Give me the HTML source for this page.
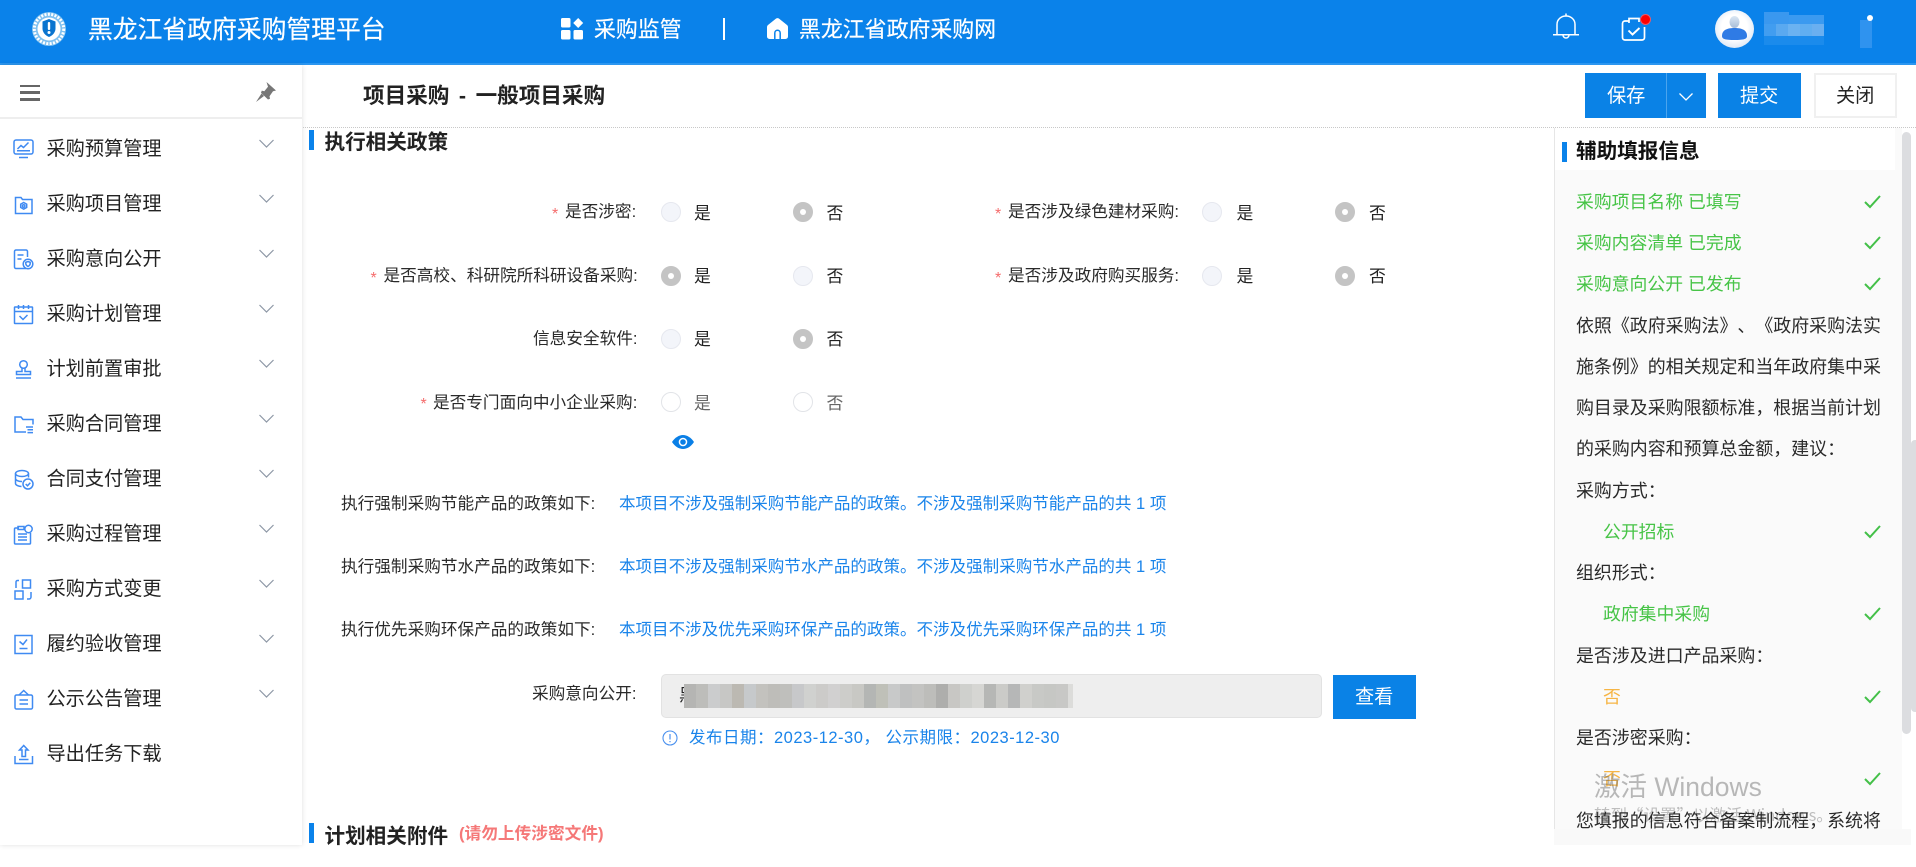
<!DOCTYPE html>
<html lang="zh-CN"><head><meta charset="utf-8"><title>项目采购</title>
<style>
html,body{margin:0;padding:0;width:1916px;height:867px;overflow:hidden;background:#fff}
body{position:relative;font-family:"Liberation Sans","Noto Sans CJK SC",sans-serif;color:#222;font-feature-settings:"chws" 0,"palt" 0;text-spacing-trim:space-all}
.a{position:absolute}
.t{position:absolute;white-space:nowrap;line-height:30px;height:30px}
.h{-webkit-text-stroke:.2px #fff}
.m{font-size:19.2px;left:46.5px;color:#222}
.l{font-size:16.65px;color:#2a2a2a}
.s{font-size:16px;color:#f56c6c}
.b{font-size:16.8px;color:#222}
.k{font-size:16.55px;color:#1a84ea}
.p{font-size:17.95px;left:1576px;color:#2a2a2a}
.g{font-size:17.85px;color:#47c447}
.o{font-size:17.85px;color:#f6b545;left:1603px}
.r{position:absolute;width:18px;height:18px;border:1px solid #e6e8ef;border-radius:50%;background:#f3f5fa}
.r.c{background:#c4c4c4;border-color:#c4c4c4}
.r.c:after{content:"";position:absolute;left:6px;top:6px;width:6px;height:6px;border-radius:50%;background:#fff}
.r.w{background:#fff;border-color:#e2e4e8}
svg{position:absolute;display:block;overflow:visible}
.i{left:13px;width:21px;height:21px}
.i *{fill:none;stroke:#3f8af2;stroke-width:1.5}
.ch{left:259px;width:15px;height:9px}
.ch polyline{fill:none;stroke:#8d97a5;stroke-width:1.2}
.tk{left:1864px;width:17px;height:13px}
.tk polyline{fill:none;stroke:#43c048;stroke-width:2}
</style></head><body>

<!-- header -->
<div class="a" style="left:0;top:0;width:1916px;height:63px;background:#0a82ea"></div>
<div class="a" style="left:0;top:63px;width:1916px;height:2px;background:#2b96f0"></div>
<svg style="left:32px;top:12px;width:34px;height:34px" viewBox="0 0 34 34">
<circle cx="17" cy="17" r="17" fill="#7fc0f0"/><circle cx="17" cy="17" r="14.700" fill="none" stroke="#fff" stroke-width="3" stroke-dasharray="2 1.400"/>
<circle cx="17" cy="17" r="11.500" fill="#fff"/>
<path d="M17 7l6.500 2.500v7c0 4-3 7-6.500 8.500-3.500-1.500-6.500-4.500-6.500-8.500v-7z" fill="#0a74cf"/>
<rect x="15.800" y="10" width="2.400" height="8" rx="1" fill="#fff"/><circle cx="17" cy="20.500" r="1.500" fill="#fff"/></svg>
<div class="t h" style="left:88px;top:16px;font-size:24.8px;color:#fff">黑龙江省政府采购管理平台</div>
<svg style="left:561px;top:18px;width:22px;height:22px" viewBox="0 0 22 22" fill="#fff">
<rect x="0" y="0" width="9.5" height="9.5" rx="1.5"/><rect x="0" y="12" width="9.5" height="9.5" rx="1.5"/><rect x="12.5" y="12" width="9.5" height="9.5" rx="1.5"/>
<path d="M17.2 0l5 5-5 5-5-5z"/></svg>
<div class="t h" style="left:594px;top:15px;font-size:21.9px;color:#fff">采购监管</div>
<div class="a" style="left:723px;top:18px;width:2px;height:22px;background:#fff"></div>
<svg style="left:767px;top:18px;width:21px;height:21px" viewBox="0 0 21 21">
<path d="M8.800 .8a2.700 2.700 0 0 1 3.400 0L20 7a2.500 2.500 0 0 1 1 2v9.500a2.500 2.500 0 0 1-2.500 2.500h-16A2.500 2.500 0 0 1 0 18.500V9a2.500 2.500 0 0 1 1-2z" fill="#fff"/>
<path d="M7.800 21v-6a2.700 2.700 0 0 1 5.400 0v6" fill="none" stroke="#0a82ea" stroke-width="1.500"/></svg>
<div class="t h" style="left:799px;top:14.500px;font-size:21.9px;color:#fff">黑龙江省政府采购网</div>
<svg style="left:1553px;top:13px;width:26px;height:26px" viewBox="0 0 26 26" fill="none" stroke="#fff" stroke-width="1.500">
<path d="M4 21.500V11.500C4 6.500 8 3 13 3s9 3.500 9 8.500v10"/><path d="M0 21.800h26"/><path d="M13 0.500v2.500"/><path d="M10 22a3 3 0 0 0 6 0"/></svg>
<svg style="left:1622px;top:17px;width:28px;height:26px" viewBox="0 0 28 26" fill="none" stroke="#fff" stroke-width="1.700">
<path d="M7 4H3a2.500 2.500 0 0 0-2.500 2.500v14A2.500 2.500 0 0 0 3 23h17a2.500 2.500 0 0 0 2.500-2.500V10"/>
<path d="M7 6V1.500h10V5"/><path d="M6.500 13.500l4 4 7-6.500" stroke-width="1.900"/></svg>
<div class="a" style="left:1639.500px;top:13.500px;width:9px;height:9px;background:#f00;border-radius:50%;border:1px solid #e85a6a"></div>
<svg style="left:1715px;top:10px;width:39px;height:38px" viewBox="0 0 39 38">
<defs><radialGradient id="av" cx="50%" cy="45%" r="55%"><stop offset="60%" stop-color="#fff"/><stop offset="100%" stop-color="#dfe9f6"/></radialGradient>
<linearGradient id="hd" x1="0" y1="0" x2="0" y2="1"><stop offset="0" stop-color="#dbe7f4"/><stop offset="1" stop-color="#a8bdd8"/></linearGradient></defs>
<ellipse cx="19.500" cy="19" rx="19.500" ry="19" fill="url(#av)"/>
<ellipse cx="19.500" cy="12" rx="5" ry="6" fill="url(#hd)"/>
<path d="M7 26c0-6 5-8 12.500-8S32 20 32 26c0 3-3 4-12.500 4S7 29 7 26z" fill="#2f7be5"/></svg>
<svg style="left:1764px;top:12px;width:60px;height:33px" viewBox="0 0 60 33">
<rect x="0" y="0" width="25" height="12" fill="#3a98ef"/><rect x="25" y="3" width="35" height="9" fill="#3b9af0"/>
<rect x="0" y="12" width="12" height="12" fill="#419df0"/><rect x="12" y="12" width="12" height="12" fill="#5aa9f0"/><rect x="24" y="12" width="12" height="12" fill="#6bb2f1"/><rect x="36" y="12" width="12" height="12" fill="#60aef1"/><rect x="48" y="12" width="12" height="12" fill="#6aaff0"/>
<rect x="0" y="24" width="60" height="9" fill="#1b8bec"/></svg>
<div class="a" style="left:1860px;top:20px;width:12px;height:28px;background:#2f93ef"></div>
<div class="a" style="left:1867px;top:15px;width:6px;height:6px;border-radius:50%;background:#fff"></div>

<!-- sidebar -->
<div class="a" style="left:0;top:65px;width:302px;height:780px;background:#fff;box-shadow:0 0 5px rgba(0,0,0,.13)"></div>
<div class="a" style="left:0;top:117px;width:302px;height:1.500px;background:#eee"></div>
<div class="a" style="left:20px;top:84.500px;width:20px;height:2.800px;background:#666"></div>
<div class="a" style="left:20px;top:91.300px;width:20px;height:2.800px;background:#666"></div>
<div class="a" style="left:20px;top:98px;width:20px;height:2.800px;background:#666"></div>
<svg style="left:255px;top:82px;width:21px;height:20px" viewBox="0 0 21 20" fill="#777">
<path d="M11.500 0L21 8.500l-3 .8-3.500 5 .5 2.500-2 .7-7-6.700.8-2.200 2.500.6 3.700-4.400z"/><path d="M6.500 11.500l2.500 2.500L1 20z"/></svg>

<svg class="i" style="top:139px" viewBox="0 0 21 21"><rect x="1" y="1" width="19" height="14" rx="2"/><polyline points="4.500,10 8,6.500 10.500,8.500 15.500,3.500"/><path d="M4 11.800h13M6 18.500h9"/></svg>
<svg class="i" style="top:194px" viewBox="0 0 21 21"><path d="M2.500 3.500h5.500l1.500 2h9.500v14h-16.500z"/><path d="M10.700 8.500l3 1.700v3.300l-3 1.700-3-1.700v-3.300z"/><circle cx="10.700" cy="12" r="1.200"/></svg>
<svg class="i" style="top:249px" viewBox="0 0 21 21"><path d="M13 19.500H3a1.500 1.500 0 0 1-1.500-1.500V2.500A1.500 1.500 0 0 1 3 1h10a1.500 1.500 0 0 1 1.500 1.500V8" stroke="#a8c0f2"/><path d="M4.500 6h6M4.500 10h4" /><circle cx="15" cy="15" r="4.800"/><path d="M15 12.500l2.200 .8v1.500c0 1.200-1 2-2.200 2.700-1.200-.7-2.200-1.500-2.200-2.700v-1.500z"/></svg>
<svg class="i" style="top:304px" viewBox="0 0 21 21"><rect x="1.500" y="3" width="18" height="16.500" rx=".5"/><path d="M1.500 7.500h18"/><path d="M5.500 1v4M10.500 1v4M15.500 1v4"/><polyline points="6.500,12 10,15.500 14.500,11"/></svg>
<svg class="i" style="top:359px" viewBox="0 0 21 21"><circle cx="10.500" cy="5.500" r="3.800"/><path d="M9 9v3.500H3.500v3h14v-3H12V9"/><path d="M3 19h15" stroke-width="2" stroke="#a8c0f2"/></svg>
<svg class="i" style="top:414px" viewBox="0 0 21 21"><path d="M13 18H2V3h6l2 2.500h10v5"/><path d="M13 13h7M14.500 15.800h5.500M14.500 18.600h5.500" stroke-width="1.500"/></svg>
<svg class="i" style="top:469px" viewBox="0 0 21 21"><ellipse cx="9" cy="4.500" rx="6.500" ry="3"/><path d="M2.500 4.500v10c0 1.500 3 3 6 3M15.500 4.500v4M2.500 9.500c0 1.700 3 3 6.500 3"/><circle cx="15" cy="15" r="5"/><polyline points="12.700,15 14.500,16.800 17.300,13.800"/></svg>
<svg class="i" style="top:524px" viewBox="0 0 21 21"><path d="M6 4H2.500a1 1 0 0 0-1 1v14a1 1 0 0 0 1 1h14a1 1 0 0 0 1-1V9" stroke="#a8b8f2"/><path d="M5 2.500h6v3H5z"/><circle cx="15.500" cy="5" r="3.700"/><path d="M5 10h9M5 13h9M5 16h9"/></svg>
<svg class="i" style="top:579px" viewBox="0 0 21 21"><rect x="9.500" y="1" width="8" height="8"/><rect x="2" y="12" width="8" height="8"/><path d="M3 9V3a1.500 1.500 0 0 1 1.500-1.500H6M18 13v5a2 2 0 0 1-2 2h-2"/></svg>
<svg class="i" style="top:634px" viewBox="0 0 21 21"><rect x="2" y="1.500" width="17" height="18" stroke="#7aa5f2"/><polyline points="6.500,7.500 10,10.500 14,5.500"/><path d="M6.500 14.500h8"/></svg>
<svg class="i" style="top:689px" viewBox="0 0 21 21"><rect x="2" y="6" width="17.500" height="14" rx="1.500"/><path d="M6 6l4.700-4.500L15.500 6"/><path d="M6.500 11h8.500M6.500 15h8.500"/></svg>
<svg class="i" style="top:744px" viewBox="0 0 21 21"><path d="M2 12v7.500h17.500V12"/><path d="M6 15.500h9.500"/><path d="M10.700 1.500l-4.200 4.500h2.500v6.500h3.500V6H15z"/></svg>

<div class="t m" style="top:134.500px">采购预算管理</div>
<div class="t m" style="top:189.500px">采购项目管理</div>
<div class="t m" style="top:244.500px">采购意向公开</div>
<div class="t m" style="top:299.500px">采购计划管理</div>
<div class="t m" style="top:354.500px">计划前置审批</div>
<div class="t m" style="top:409.500px">采购合同管理</div>
<div class="t m" style="top:464.500px">合同支付管理</div>
<div class="t m" style="top:519.500px">采购过程管理</div>
<div class="t m" style="top:574.500px">采购方式变更</div>
<div class="t m" style="top:629.500px">履约验收管理</div>
<div class="t m" style="top:684.500px">公示公告管理</div>
<div class="t m" style="top:739.500px">导出任务下载</div>

<svg class="ch" style="top:139px" viewBox="0 0 15 9"><polyline points="0.500,1 7.500,8 14.500,1"/></svg>
<svg class="ch" style="top:194px" viewBox="0 0 15 9"><polyline points="0.500,1 7.500,8 14.500,1"/></svg>
<svg class="ch" style="top:249px" viewBox="0 0 15 9"><polyline points="0.500,1 7.500,8 14.500,1"/></svg>
<svg class="ch" style="top:304px" viewBox="0 0 15 9"><polyline points="0.500,1 7.500,8 14.500,1"/></svg>
<svg class="ch" style="top:359px" viewBox="0 0 15 9"><polyline points="0.500,1 7.500,8 14.500,1"/></svg>
<svg class="ch" style="top:414px" viewBox="0 0 15 9"><polyline points="0.500,1 7.500,8 14.500,1"/></svg>
<svg class="ch" style="top:469px" viewBox="0 0 15 9"><polyline points="0.500,1 7.500,8 14.500,1"/></svg>
<svg class="ch" style="top:524px" viewBox="0 0 15 9"><polyline points="0.500,1 7.500,8 14.500,1"/></svg>
<svg class="ch" style="top:579px" viewBox="0 0 15 9"><polyline points="0.500,1 7.500,8 14.500,1"/></svg>
<svg class="ch" style="top:634px" viewBox="0 0 15 9"><polyline points="0.500,1 7.500,8 14.500,1"/></svg>
<svg class="ch" style="top:689px" viewBox="0 0 15 9"><polyline points="0.500,1 7.500,8 14.500,1"/></svg>

<!-- title bar -->
<div class="t" style="left:363px;top:81px;font-size:21.600px;font-weight:700;color:#222;word-spacing:3.500px">项目采购 - 一般项目采购</div>
<div class="a" style="left:303px;top:127px;width:1613px;height:0;border-top:1px dotted #c8c8c8"></div>
<div class="a" style="left:1585px;top:73px;width:121px;height:45px;background:#0a82e6"></div>
<div class="a" style="left:1666px;top:73px;width:1px;height:45px;background:#4ba4ee"></div>
<div class="t" style="left:1607px;top:82px;font-size:19.200px;color:#fff">保存</div>
<svg style="left:1679px;top:93px;width:14px;height:8px" viewBox="0 0 14 8"><polyline points="0.500,0.500 7,7 13.500,0.500" fill="none" stroke="#fff" stroke-width="1.300"/></svg>
<div class="a" style="left:1718px;top:73px;width:83px;height:45px;background:#0a82e6"></div>
<div class="t" style="left:1740px;top:82px;font-size:19.200px;color:#fff">提交</div>
<div class="a" style="left:1814px;top:73px;width:79px;height:41px;border:2px solid #f0f0f0;background:#fff"></div>
<div class="t" style="left:1836px;top:82px;font-size:19.200px;color:#222">关闭</div>

<!-- section -->
<div class="a" style="left:309px;top:130px;width:5px;height:20px;background:#0a82ea"></div>
<div class="t" style="left:324.500px;top:128px;font-size:20.600px;font-weight:700;color:#222">执行相关政策</div>

<!-- form rows -->
<div class="t s" style="left:552px;top:200px">*</div>
<div class="t l" style="left:565px;top:196.500px">是否涉密:</div>
<div class="r" style="left:661px;top:202px"></div><div class="t b" style="left:694px;top:198.500px">是</div>
<div class="r c" style="left:793px;top:202px"></div><div class="t b" style="left:826.500px;top:198.500px">否</div>

<div class="t s" style="left:995px;top:200px">*</div>
<div class="t l" style="left:1008px;top:196.500px">是否涉及绿色建材采购:</div>
<div class="r" style="left:1202px;top:202px"></div><div class="t b" style="left:1236.500px;top:198.500px">是</div>
<div class="r c" style="left:1335px;top:202px"></div><div class="t b" style="left:1369px;top:198.500px">否</div>

<div class="t s" style="left:370.500px;top:263.500px">*</div>
<div class="t l" style="left:383.500px;top:260.500px">是否高校、科研院所科研设备采购:</div>
<div class="r c" style="left:661px;top:265.500px"></div><div class="t b" style="left:694px;top:261.500px">是</div>
<div class="r" style="left:793px;top:265.500px"></div><div class="t b" style="left:826.500px;top:261.500px">否</div>

<div class="t s" style="left:995px;top:263.500px">*</div>
<div class="t l" style="left:1008px;top:260.500px">是否涉及政府购买服务:</div>
<div class="r" style="left:1202px;top:265.500px"></div><div class="t b" style="left:1236.500px;top:261.500px">是</div>
<div class="r c" style="left:1335px;top:265.500px"></div><div class="t b" style="left:1369px;top:261.500px">否</div>

<div class="t l" style="left:533px;top:323.500px">信息安全软件:</div>
<div class="r" style="left:661px;top:329px"></div><div class="t b" style="left:694px;top:325px">是</div>
<div class="r c" style="left:793px;top:329px"></div><div class="t b" style="left:826.500px;top:325px">否</div>

<div class="t s" style="left:420.500px;top:390px">*</div>
<div class="t l" style="left:433px;top:387.500px">是否专门面向中小企业采购:</div>
<div class="r w" style="left:661px;top:392px"></div><div class="t b" style="left:694px;top:389px;color:#666">是</div>
<div class="r w" style="left:793px;top:392px"></div><div class="t b" style="left:826.500px;top:389px;color:#666">否</div>

<svg style="left:672px;top:435px;width:22px;height:14px" viewBox="0 0 22 14"><path d="M0 7C3 2.500 7 0 11 0s8 2.500 11 7c-3 4.500-7 7-11 7S3 11.500 0 7z" fill="#0a7fe6"/><circle cx="11" cy="7" r="4.300" fill="#fff"/><circle cx="11" cy="7" r="2.800" fill="#0a7fe6"/></svg>

<div class="t l" style="left:341px;top:489px">执行强制采购节能产品的政策如下:</div>
<div class="t k" style="left:619px;top:489px">本项目不涉及强制采购节能产品的政策。不涉及强制采购节能产品的共 1 项</div>
<div class="t l" style="left:341px;top:552px">执行强制采购节水产品的政策如下:</div>
<div class="t k" style="left:619px;top:552px">本项目不涉及强制采购节水产品的政策。不涉及强制采购节水产品的共 1 项</div>
<div class="t l" style="left:341px;top:615px">执行优先采购环保产品的政策如下:</div>
<div class="t k" style="left:619px;top:615px">本项目不涉及优先采购环保产品的政策。不涉及优先采购环保产品的共 1 项</div>

<div class="t l" style="left:532px;top:678.500px">采购意向公开:</div>
<div class="a" style="left:661px;top:674px;width:659px;height:42px;background:#eee;border:1px solid #e2e2e2;border-radius:5px"></div>
<div class="t b" style="left:679px;top:681px">黑</div>
<svg style="left:684px;top:684px;width:389px;height:24px" viewBox="0 0 389 24" shape-rendering="crispEdges">
<g fill="#b5b5b3"><rect x="0" y="0" width="12" height="24"/></g>
<rect x="12" y="0" width="12" height="24" fill="#bdbdba"/><rect x="24" y="0" width="12" height="24" fill="#cbcccd"/><rect x="36" y="0" width="12" height="24" fill="#c7c7c5"/><rect x="48" y="0" width="12" height="24" fill="#bcb9b2"/><rect x="60" y="0" width="12" height="24" fill="#c6c9cb"/><rect x="72" y="0" width="12" height="24" fill="#c3c2be"/><rect x="84" y="0" width="12" height="24" fill="#bebdb9"/><rect x="96" y="0" width="12" height="24" fill="#bfbfbc"/><rect x="108" y="0" width="12" height="24" fill="#c7c8ca"/><rect x="120" y="0" width="12" height="24" fill="#d0d1cf"/><rect x="132" y="0" width="12" height="24" fill="#cccbc9"/><rect x="144" y="0" width="12" height="24" fill="#d1d0d0"/><rect x="156" y="0" width="12" height="24" fill="#cdcdca"/><rect x="168" y="0" width="12" height="24" fill="#c8c8c4"/><rect x="180" y="0" width="12" height="24" fill="#b4b6b4"/><rect x="192" y="0" width="12" height="24" fill="#bfc0b8"/><rect x="204" y="0" width="12" height="24" fill="#c8c9c9"/><rect x="216" y="0" width="12" height="24" fill="#bfc0c0"/><rect x="228" y="0" width="12" height="24" fill="#c3c3c1"/><rect x="240" y="0" width="12" height="24" fill="#bdbdba"/><rect x="252" y="0" width="12" height="24" fill="#aeaeac"/><rect x="264" y="0" width="12" height="24" fill="#c8c7c4"/><rect x="276" y="0" width="12" height="24" fill="#cfd0cd"/><rect x="288" y="0" width="12" height="24" fill="#d6d6d3"/><rect x="300" y="0" width="12" height="24" fill="#b6b7b5"/><rect x="312" y="0" width="12" height="24" fill="#cbcbc8"/><rect x="324" y="0" width="12" height="24" fill="#b6b7b7"/><rect x="336" y="0" width="12" height="24" fill="#d0d0cd"/><rect x="348" y="0" width="12" height="24" fill="#c8c9c6"/><rect x="360" y="0" width="12" height="24" fill="#c6c7c4"/><rect x="372" y="0" width="12" height="24" fill="#c8c8c6"/><rect x="384" y="0" width="5" height="24" fill="#dcdcda"/></svg>
<div class="a" style="left:1333px;top:675px;width:83px;height:44px;background:#0a82e6"></div>
<div class="t" style="left:1355px;top:683px;font-size:19.200px;color:#fff">查看</div>
<svg style="left:662px;top:730px;width:16px;height:16px" viewBox="0 0 16 16"><circle cx="8" cy="8" r="7" fill="none" stroke="#4a90ee" stroke-width="1.100"/><path d="M8 4v5.500M8 11v1.200" stroke="#4a90ee" stroke-width="1.200" fill="none"/></svg>
<div class="t" style="left:689px;top:723px;font-size:16.500px;letter-spacing:.5px;color:#1a84ea">发布日期：2023-12-30， 公示期限：2023-12-30</div>

<div class="a" style="left:309px;top:823px;width:5px;height:20px;background:#0a82ea"></div>
<div class="t" style="left:324.500px;top:821.500px;font-size:20.600px;font-weight:700;color:#222">计划相关附件</div>
<div class="t" style="left:459px;top:819px;font-size:16.700px;font-weight:700;color:#f57878">(请勿上传涉密文件)</div>

<!-- right panel -->
<div class="a" style="left:1554px;top:128px;width:348px;height:701px;background:#fafafa;border-left:1px solid #e6e6e6;box-sizing:border-box"></div>
<div class="a" style="left:1555px;top:128px;width:340px;height:42px;background:#fff"></div>
<div class="a" style="left:1562px;top:142px;width:5px;height:20px;background:#0a82ea"></div>
<div class="t" style="left:1576px;top:137px;font-size:20.600px;font-weight:700;color:#111">辅助填报信息</div>

<div class="a" style="left:1902px;top:132px;width:9px;height:602px;background:#dcdde0;border-radius:5px"></div>
<div class="a" style="left:1911px;top:440px;width:5px;height:272px;background:#dcdde0;border-radius:4px 0 0 4px"></div>
<div class="a" style="left:1554px;top:829px;width:357px;height:16px;background:#f9f9f9"></div>

<div class="t g" style="left:1576px;top:187px">采购项目名称 已填写</div>
<div class="t g" style="left:1576px;top:228px">采购内容清单 已完成</div>
<div class="t g" style="left:1576px;top:269px">采购意向公开 已发布</div>
<div class="t p" style="top:310.500px">依照《政府采购法》、《政府采购法实</div>
<div class="t p" style="top:352px">施条例》的相关规定和当年政府集中采</div>
<div class="t p" style="top:393px">购目录及采购限额标准，根据当前计划</div>
<div class="t p" style="top:434px">的采购内容和预算总金额，建议：</div>
<div class="t p" style="top:476px">采购方式：</div>
<div class="t g" style="left:1603px;top:517px">公开招标</div>
<div class="t p" style="top:558px">组织形式：</div>
<div class="t g" style="left:1603px;top:599px">政府集中采购</div>
<div class="t p" style="top:641px">是否涉及进口产品采购：</div>
<div class="t o" style="top:682px">否</div>
<div class="t p" style="top:723px">是否涉密采购：</div>
<div class="t o" style="top:764px">否</div>
<svg class="tk" style="top:195px" viewBox="0 0 17 13"><polyline points="1,7 6,12 16,1"/></svg>
<svg class="tk" style="top:236px" viewBox="0 0 17 13"><polyline points="1,7 6,12 16,1"/></svg>
<svg class="tk" style="top:277px" viewBox="0 0 17 13"><polyline points="1,7 6,12 16,1"/></svg>
<svg class="tk" style="top:525px" viewBox="0 0 17 13"><polyline points="1,7 6,12 16,1"/></svg>
<svg class="tk" style="top:607px" viewBox="0 0 17 13"><polyline points="1,7 6,12 16,1"/></svg>
<svg class="tk" style="top:690px" viewBox="0 0 17 13"><polyline points="1,7 6,12 16,1"/></svg>
<svg class="tk" style="top:772px" viewBox="0 0 17 13"><polyline points="1,7 6,12 16,1"/></svg>

<div class="t" style="left:1594px;top:772px;font-size:26.500px;color:rgba(90,90,90,.42)">激活 Windows</div>
<div class="t" style="left:1594px;top:799px;font-size:16.500px;font-family:'Noto Sans CJK SC',sans-serif;color:rgba(90,90,90,.38);height:30px;overflow:hidden">转到“设置”以激活 Windows。</div>
<div class="t p" style="top:806px;height:23px;overflow:hidden">您填报的信息符合备案制流程，系统将</div>
</body></html>
